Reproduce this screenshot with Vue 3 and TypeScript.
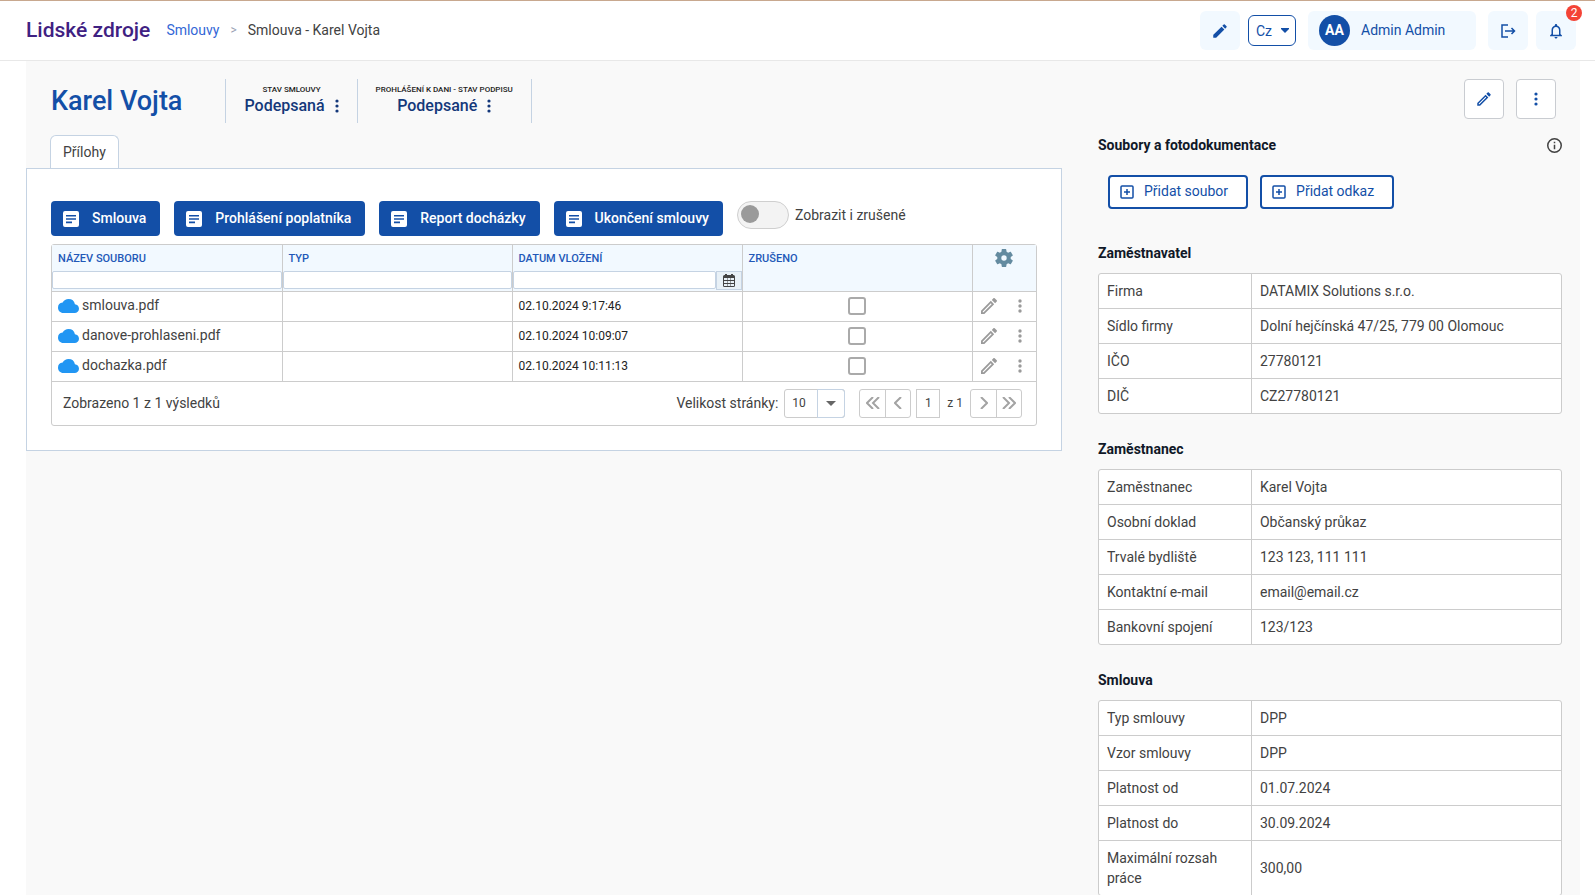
<script setup lang="ts">
import { ref } from 'vue'

interface Row { label: string; value: string }
interface Section { title: string; rows: Row[] }
interface FileRow { name: string; date: string; cancelled: boolean }

const PENCIL = 'M14.06 9.02l.92.92L5.92 19H5v-.92l9.06-9.06M17.66 3c-.25 0-.51.1-.7.29l-1.83 1.83 3.75 3.75 1.83-1.83c.39-.39.39-1.02 0-1.41l-2.34-2.34c-.2-.2-.45-.29-.71-.29zm-3.6 3.19L3 17.25V21h3.75L17.81 9.94l-3.75-3.75z'

const statuses = [
  { label: 'Stav smlouvy', value: 'Podepsaná' },
  { label: 'Prohlášení k dani - stav podpisu', value: 'Podepsané' },
]

const reports = ['Smlouva', 'Prohlášení poplatníka', 'Report docházky', 'Ukončení smlouvy']

const showCancelled = ref(false)

const files = ref<FileRow[]>([
  { name: 'smlouva.pdf', date: '02.10.2024 9:17:46', cancelled: false },
  { name: 'danove-prohlaseni.pdf', date: '02.10.2024 10:09:07', cancelled: false },
  { name: 'dochazka.pdf', date: '02.10.2024 10:11:13', cancelled: false },
])

const sections: Section[] = [
  {
    title: 'Zaměstnavatel',
    rows: [
      { label: 'Firma', value: 'DATAMIX Solutions s.r.o.' },
      { label: 'Sídlo firmy', value: 'Dolní hejčínská 47/25, 779 00 Olomouc' },
      { label: 'IČO', value: '27780121' },
      { label: 'DIČ', value: 'CZ27780121' },
    ],
  },
  {
    title: 'Zaměstnanec',
    rows: [
      { label: 'Zaměstnanec', value: 'Karel Vojta' },
      { label: 'Osobní doklad', value: 'Občanský průkaz' },
      { label: 'Trvalé bydliště', value: '123 123, 111 111' },
      { label: 'Kontaktní e-mail', value: 'email@email.cz' },
      { label: 'Bankovní spojení', value: '123/123' },
    ],
  },
  {
    title: 'Smlouva',
    rows: [
      { label: 'Typ smlouvy', value: 'DPP' },
      { label: 'Vzor smlouvy', value: 'DPP' },
      { label: 'Platnost od', value: '01.07.2024' },
      { label: 'Platnost do', value: '30.09.2024' },
      { label: 'Maximální rozsah práce', value: '300,00' },
    ],
  },
]
</script>

<template>
  <div class="page">
    <header class="topbar">
      <h2 class="app-name">Lidské zdroje</h2>
      <nav class="crumbs" aria-label="Navigace">
        <a href="#">Smlouvy</a>
        <span class="sep">&gt;</span>
        <span>Smlouva - Karel Vojta</span>
      </nav>
      <div class="tools">
        <div class="tool-group">
          <button class="tool" type="button" aria-label="Upravit">
            <svg viewBox="0 0 24 24" width="18" height="18"><path d="M3 17.46v3.04c0 .28.22.5.5.5h3.04c.13 0 .26-.05.35-.15L17.81 9.94l-3.75-3.75L3.15 17.1c-.1.1-.15.22-.15.36zM20.71 7.04a1 1 0 0 0 0-1.41l-2.34-2.34a1 1 0 0 0-1.41 0l-1.83 1.83 3.75 3.75 1.83-1.83z" /></svg>
          </button>
          <span class="lang">
            <select aria-label="Jazyk"><option>Cz</option></select>
            <svg viewBox="0 0 8 5" width="8" height="5"><path d="M0 0h8v1L4 5 0 1z" /></svg>
          </span>
        </div>
        <button class="user" type="button">
          <span class="avatar">AA</span>
          <span>Admin Admin</span>
        </button>
        <div class="tool-group">
          <button class="tool" type="button" aria-label="Odhlásit">
            <svg viewBox="0 0 16 16" width="16" height="16" class="line"><path d="M8 2H2v12h6M5 8h9M11.5 5l3 3-3 3" /></svg>
          </button>
          <button class="tool" type="button" aria-label="Oznámení">
            <svg viewBox="0 0 24 24" width="18" height="18"><path d="M12 22c1.1 0 2-.9 2-2h-4c0 1.1.9 2 2 2zm6-6v-5c0-3.07-1.63-5.64-4.5-6.32V4c0-.83-.67-1.5-1.5-1.5s-1.5.67-1.5 1.5v.68C7.64 5.36 6 7.92 6 11v5l-2 2v1h16v-1l-2-2zm-2 1H8v-6c0-2.48 1.51-4.5 4-4.5s4 2.02 4 4.5v6z" /></svg>
            <span class="badge">2</span>
          </button>
        </div>
      </div>
    </header>

    <main class="content">
      <div class="record-head">
        <h1>Karel Vojta</h1>
        <div class="statuses">
          <div v-for="s in statuses" :key="s.label" class="status">
            <span class="status-label">{{ s.label }}</span>
            <button class="status-value" type="button">
              {{ s.value }}
              <svg viewBox="0 0 4 14" width="4" height="14"><circle v-for="y in [2, 7, 12]" :key="y" cx="2" :cy="y" r="1.6" /></svg>
            </button>
          </div>
        </div>
        <div class="record-actions">
          <button type="button" aria-label="Upravit záznam">
            <svg viewBox="0 0 24 24" width="18" height="18"><path :d="PENCIL" /></svg>
          </button>
          <button type="button" aria-label="Další akce">
            <svg viewBox="0 0 4 14" width="4" height="14"><circle v-for="y in [2, 7, 12]" :key="y" cx="2" :cy="y" r="1.6" /></svg>
          </button>
        </div>
      </div>

      <div class="columns">
        <section class="main-col">
          <div class="tabs" role="tablist">
            <button class="tab" type="button" role="tab" aria-selected="true">Přílohy</button>
          </div>
          <div class="panel">
            <div class="actions">
              <button v-for="r in reports" :key="r" class="primary" type="button">
                <svg viewBox="0 0 16 16" width="16" height="16"><path fill-rule="evenodd" d="M2 0h12a2 2 0 0 1 2 2v12a2 2 0 0 1-2 2H2a2 2 0 0 1-2-2V2a2 2 0 0 1 2-2zM3 4v1.6h10V4zM3 7.2v1.6h10V7.2zM3 10.6v1.6h6v-1.6z" /></svg>
                <span>{{ r }}</span>
              </button>
              <label class="switch">
                <input v-model="showCancelled" type="checkbox" role="switch" />
                <span class="track"></span>
                Zobrazit i zrušené
              </label>
            </div>

            <div class="grid-box">
              <table class="files">
                <colgroup>
                  <col /><col /><col /><col /><col class="col-tools" />
                </colgroup>
                <thead>
                  <tr>
                    <th><span>Název souboru</span><input type="text" aria-label="Filtr: název souboru" /></th>
                    <th><span>Typ</span><input type="text" aria-label="Filtr: typ" /></th>
                    <th>
                      <span>Datum vložení</span>
                      <div class="date-filter">
                        <input type="text" aria-label="Filtr: datum vložení" />
                        <button type="button" aria-label="Vybrat datum">
                          <svg viewBox="0 0 12 13" width="12" height="13"><path fill-rule="evenodd" d="M2 0h2v1h4V0h2v1h.5A1.5 1.5 0 0 1 12 2.500v9a1.500 1.500 0 0 1-1.500 1.500h-9A1.500 1.500 0 0 1 0 11.500v-9A1.500 1.500 0 0 1 1.500 1H2zM1 4v2h3V4zM4.500 4v2h3V4zM8 4v2h3V4zM1 7v2h3V7zM4.500 7v2h3V7zM8 7v2h3V7zM1 10v2h3v-2zM4.500 10v2h3v-2zM8 10v2h3v-2z" /></svg>
                        </button>
                      </div>
                    </th>
                    <th><span>Zrušeno</span></th>
                    <th class="gear">
                      <button type="button" aria-label="Nastavení tabulky">
                        <svg viewBox="2 2 20 20" width="18" height="18"><path d="M19.43 12.98c.04-.32.07-.64.07-.98s-.03-.66-.07-.98l2.11-1.65c.19-.15.24-.42.12-.64l-2-3.46c-.12-.22-.39-.3-.61-.22l-2.49 1c-.52-.4-1.08-.73-1.69-.98l-.38-2.65A.49.49 0 0 0 14 2h-4c-.25 0-.46.18-.49.42l-.38 2.65c-.61.25-1.17.59-1.69.98l-2.49-1c-.23-.09-.49 0-.61.22l-2 3.46c-.13.22-.07.49.12.64l2.11 1.65c-.04.32-.07.65-.07.98s.03.66.07.98l-2.11 1.65c-.19.15-.24.42-.12.64l2 3.46c.12.22.39.3.61.22l2.49-1c.52.4 1.08.73 1.69.98l.38 2.65c.03.24.24.42.49.42h4c.25 0 .46-.18.49-.42l.38-2.65c.61-.25 1.17-.59 1.69-.98l2.49 1c.23.09.49 0 .61-.22l2-3.46c.12-.22.07-.49-.12-.64l-2.11-1.65zM12 15a3 3 0 1 1 0-6 3 3 0 0 1 0 6z" /></svg>
                      </button>
                    </th>
                  </tr>
                </thead>
                <tbody>
                  <tr v-for="f in files" :key="f.name">
                    <td>
                      <a href="#" class="file">
                        <svg viewBox="0 4 24 16" width="21" height="14"><path d="M19.35 10.04A7.49 7.49 0 0 0 12 4C9.11 4 6.6 5.64 5.35 8.04A5.994 5.994 0 0 0 0 14c0 3.31 2.69 6 6 6h13c2.76 0 5-2.24 5-5 0-2.64-2.05-4.78-4.65-4.96z" /></svg>
                        <span>{{ f.name }}</span>
                      </a>
                    </td>
                    <td></td>
                    <td class="date">{{ f.date }}</td>
                    <td class="center"><input v-model="f.cancelled" type="checkbox" :aria-label="'Zrušeno: ' + f.name" /></td>
                    <td>
                      <div class="row-tools">
                        <button type="button" aria-label="Upravit soubor"><svg viewBox="3 3 18 18" width="16" height="16"><path :d="PENCIL" /></svg></button>
                        <button type="button" aria-label="Další akce se souborem"><svg viewBox="0 0 4 16" width="4" height="16"><circle v-for="y in [3, 8, 13]" :key="y" cx="2" :cy="y" r="1.7" /></svg></button>
                      </div>
                    </td>
                  </tr>
                </tbody>
              </table>
              <div class="pager">
                <span class="summary">Zobrazeno 1 z 1 výsledků</span>
                <label for="page-size">Velikost stránky:</label>
                <span class="size">
                  <select id="page-size"><option>10</option></select>
                  <span class="size-arrow"><svg viewBox="0 0 10 5" width="10" height="5"><path d="M0 0h10L5 5z" /></svg></span>
                </span>
                <span class="pair">
                  <button type="button" aria-label="První strana"><svg viewBox="0 0 14 12" width="14" height="12"><path d="M7 0L1 6l6 6M13 0L7 6l6 6" /></svg></button>
                  <button type="button" aria-label="Předchozí strana"><svg viewBox="0 0 8 12" width="8" height="12"><path d="M7 0L1 6l6 6" /></svg></button>
                </span>
                <input class="page-no" type="text" value="1" aria-label="Strana" />
                <span class="of">z 1</span>
                <span class="pair">
                  <button type="button" aria-label="Další strana"><svg viewBox="0 0 8 12" width="8" height="12"><path d="M1 0l6 6-6 6" /></svg></button>
                  <button type="button" aria-label="Poslední strana"><svg viewBox="0 0 14 12" width="14" height="12"><path d="M1 0l6 6-6 6M7 0l6 6-6 6" /></svg></button>
                </span>
              </div>
            </div>
          </div>
        </section>

        <aside class="side-col">
          <div class="side-head">
            <h3>Soubory a fotodokumentace</h3>
            <svg viewBox="2 2 20 20" width="15" height="15"><path d="M11 7h2v2h-2zm0 4h2v6h-2zm1-9a10 10 0 1 0 0 20 10 10 0 0 0 0-20zm0 18a8 8 0 1 1 0-16 8 8 0 0 1 0 16z" /></svg>
          </div>
          <div class="add-row">
            <button v-for="t in ['Přidat soubor', 'Přidat odkaz']" :key="t" class="outline" type="button">
              <svg viewBox="0 0 14 14" width="14" height="14"><path d="M2 1h10a1 1 0 0 1 1 1v10a1 1 0 0 1-1 1H2a1 1 0 0 1-1-1V2a1 1 0 0 1 1-1zM7 4v6M4 7h6" /></svg>
              <span>{{ t }}</span>
            </button>
          </div>
          <section v-for="s in sections" :key="s.title" class="facts">
            <h3>{{ s.title }}</h3>
            <div class="facts-box">
              <table>
                <tbody>
                  <tr v-for="r in s.rows" :key="r.label">
                    <th scope="row">{{ r.label }}</th>
                    <td>{{ r.value }}</td>
                  </tr>
                </tbody>
              </table>
            </div>
          </section>
        </aside>
      </div>
    </main>
  </div>
</template>

<style>
body {
  background: #fff;
}
</style>

<style scoped>
.page {
  display: flex;
  flex-direction: column;
  height: 100vh;
  overflow: hidden;
  border-top: 1px solid #c8a88f;
  box-sizing: border-box;
  font-family: Roboto, "Liberation Sans", sans-serif;
  font-size: 14px;
  line-height: 20px;
  color: #424242;
}
.page *,
.page *::before {
  box-sizing: border-box;
}
button,
input,
select {
  font: inherit;
  color: inherit;
  margin: 0;
}
button {
  padding: 0;
  border: 0;
  background: none;
  cursor: pointer;
}
svg {
  display: block;
  flex: none;
  fill: currentColor;
}
a {
  text-decoration: none;
}
h1,
h2,
h3 {
  margin: 0;
}

.topbar {
  display: flex;
  align-items: center;
  flex: none;
  height: 60px;
  padding: 0 19px 0 26px;
  border-bottom: 1px solid #e8e8e8;
}
.app-name {
  margin-right: 16px;
  padding-bottom: 2px;
  font-size: 21px;
  font-weight: 500;
  color: #3f2182;
}
.crumbs {
  display: flex;
  gap: 11px;
  padding-bottom: 2px;
}
.crumbs a {
  color: #3367d6;
}
.crumbs .sep {
  font-size: 12px;
  color: #9a9fb5;
}
.tools {
  display: flex;
  align-items: center;
  gap: 12px;
  margin-left: auto;
  color: #134fa7;
}
.tool-group {
  display: flex;
  align-items: center;
  gap: 8px;
}
.tool {
  position: relative;
  display: grid;
  place-items: center;
  width: 40px;
  height: 39px;
  border-radius: 6px;
  background: #f2f9ff;
}
.line {
  fill: none;
  stroke: currentColor;
  stroke-width: 1.5;
}
.badge {
  position: absolute;
  top: -6px;
  right: -6px;
  width: 16px;
  height: 16px;
  border-radius: 50%;
  background: #f44336;
  color: #fff;
  font-size: 12px;
  line-height: 16px;
}
.lang {
  position: relative;
  display: flex;
  align-items: center;
}
.lang select {
  appearance: none;
  width: 48px;
  height: 31px;
  padding: 0 0 0 7px;
  border: 1px solid #134fa7;
  border-radius: 6px;
  background: #fff;
}
.lang svg {
  position: absolute;
  right: 7px;
  pointer-events: none;
}
.user {
  display: flex;
  align-items: center;
  gap: 11px;
  width: 168px;
  height: 39px;
  padding: 0 0 1px 11px;
  border-radius: 6px;
  background: #f2f9ff;
}
.avatar {
  width: 31px;
  height: 31px;
  border-radius: 50%;
  background: #134fa7;
  color: #fff;
  font-weight: 700;
  line-height: 31px;
}

.content {
  flex: 1;
  min-height: 0;
  margin: 0 15px 0 26px;
  background: #f9f9f9;
}
.record-head {
  display: flex;
  align-items: flex-start;
  padding: 18px 24px 0 25px;
}
h1 {
  font-size: 27px;
  font-weight: 500;
  line-height: 44px;
  color: #134fa7;
}
.statuses {
  display: flex;
  margin-left: 43px;
  border-left: 1px solid #c5d3e3;
}
.status {
  display: flex;
  flex-direction: column;
  align-items: center;
  height: 44px;
  padding: 6px 18px 0;
  border-right: 1px solid #c5d3e3;
}
.status-label {
  font-size: 8px;
  font-weight: 500;
  line-height: 10px;
  text-transform: uppercase;
  color: #222;
}
.status-value {
  display: flex;
  align-items: center;
  gap: 10px;
  font-size: 16px;
  font-weight: 500;
  line-height: 22px;
  color: #14387a;
}
.record-actions {
  display: flex;
  gap: 12px;
  margin-left: auto;
}
.record-actions button {
  display: grid;
  place-items: center;
  width: 40px;
  height: 40px;
  border: 1px solid #c9ccd1;
  border-radius: 4px;
  background: #fff;
  color: #134fa7;
}

.columns {
  display: grid;
  grid-template-columns: minmax(0, 1036fr) minmax(0, 464fr);
  gap: 36px;
  align-items: start;
  padding-right: 18px;
}
.tabs {
  display: flex;
  padding: 12px 0 0 24px;
}
.tab {
  height: 33px;
  padding: 0 12px;
  border: 1px solid #c5d3e3;
  border-bottom: 0;
  border-radius: 6px 6px 0 0;
  background: #fff;
}
.panel {
  padding: 32px 24px 24px;
  border: 1px solid #c5d3e3;
  background: #fff;
}
.actions {
  display: flex;
  gap: 14px;
  margin-bottom: 8px;
}
.primary {
  display: flex;
  align-items: center;
  gap: 13px;
  height: 35px;
  padding: 0 14px 0 12px;
  border-radius: 4px;
  background: #134fa7;
  color: #fff;
  font-weight: 500;
}
.primary span,
.outline span,
.file span {
  padding-bottom: 2px;
}
.switch {
  display: flex;
  align-items: center;
  gap: 6px;
  height: 28px;
  cursor: pointer;
}
.switch input {
  position: absolute;
  opacity: 0;
}
.track {
  width: 52px;
  height: 28px;
  padding: 3px;
  border: 1px solid #cfcfcf;
  border-radius: 14px;
  background: #f3f3f3;
}
.track::before {
  content: "";
  display: block;
  width: 18px;
  height: 18px;
  border-radius: 50%;
  background: #9a9a9a;
}
.switch input:checked + .track {
  background: #cfe2ff;
}

.grid-box {
  border: 1px solid #ccc;
  border-radius: 3px;
}
.files {
  width: 100%;
  border-collapse: collapse;
  table-layout: fixed;
}
.col-tools {
  width: 64px;
}
.files th {
  height: 46px;
  padding: 0;
  vertical-align: top;
  text-align: left;
  border: 1px solid #ccc;
  background: #f2f9ff;
}
.files th > span {
  display: block;
  height: 26px;
  padding-left: 6px;
  font-size: 11px;
  font-weight: 500;
  line-height: 28px;
  text-transform: uppercase;
  color: #2258b8;
}
.files tr > :first-child {
  border-left: 0;
}
.files tr > :last-child {
  border-right: 0;
}
.files thead th {
  border-top: 0;
}
.files th input {
  display: block;
  width: 100%;
  height: 18px;
  border: 1px solid #c5d3e3;
  border-radius: 2px;
  background: #fff;
}
.date-filter {
  display: flex;
}
.date-filter button {
  display: grid;
  place-items: center;
  flex: none;
  width: 26px;
  height: 19px;
  border: 1px solid #c5d3e3;
  background: #e9f1f7;
  color: #444;
}
.gear button {
  display: block;
  margin: 4px auto 0;
  color: #648ba0;
}
.files td {
  height: 30px;
  padding: 0 6px;
  border: 1px solid #ccc;
}
.file {
  display: flex;
  align-items: center;
  gap: 3px;
  color: #424242;
}
.file svg {
  color: #2196f3;
}
.files .date {
  font-size: 12px;
  color: #222;
}
.center input {
  appearance: none;
  display: block;
  width: 18px;
  height: 18px;
  margin: 0 auto;
  border: 2px solid #aaa;
  border-radius: 3px;
  background: #fff;
}
.center input:checked {
  background: #134fa7;
}
.row-tools {
  display: flex;
  justify-content: space-between;
  padding: 0 8px 0 2px;
  color: #9a9a9a;
}
.pager {
  display: flex;
  align-items: center;
  height: 43px;
  padding: 0 14px 0 11px;
}
.summary {
  margin-right: auto;
}
.size {
  position: relative;
  display: flex;
  margin: 0 14px 0 6px;
}
.size select {
  appearance: none;
  width: 61px;
  height: 29px;
  padding: 0 0 0 7px;
  border: 1px solid #ccc;
  border-radius: 3px;
  background: #fff;
  font-size: 12px;
}
.size-arrow {
  position: absolute;
  top: 0;
  right: 0;
  display: grid;
  place-items: center;
  width: 28px;
  height: 29px;
  border: 1px solid #c5d3e3;
  border-radius: 0 3px 3px 0;
  pointer-events: none;
  color: #666;
}
.pair {
  display: flex;
  border: 1px solid #ccc;
  border-radius: 3px;
}
.pair button {
  display: grid;
  place-items: center;
  width: 25px;
  height: 27px;
  color: #a3a3a3;
}
.pair button + button {
  border-left: 1px solid #ccc;
}
.pair svg {
  fill: none;
  stroke: currentColor;
  stroke-width: 2;
}
.page-no {
  width: 24px;
  height: 29px;
  margin: 0 7px 0 5px;
  padding: 0;
  border: 1px solid #ccc;
  text-align: center;
  font-size: 12px;
}
.of {
  margin-right: 7px;
  font-size: 12px;
}

.side-head {
  display: flex;
  align-items: center;
  justify-content: space-between;
  margin-top: 12px;
}
h3 {
  font-size: 14px;
  font-weight: 700;
  line-height: 20px;
  color: #101828;
}
.add-row {
  display: flex;
  gap: 12px;
  margin: 20px 0 34px 10px;
}
.outline {
  display: flex;
  align-items: center;
  gap: 10px;
  height: 34px;
  padding: 0 18px 0 10px;
  border: 2px solid #134fa7;
  border-radius: 4px;
  background: #fff;
  color: #134fa7;
}
.outline svg {
  fill: none;
  stroke: currentColor;
  stroke-width: 1.5;
}
.facts {
  margin-bottom: 25px;
}
.facts h3 {
  margin-bottom: 10px;
}
.facts-box {
  border: 1px solid #ccc;
  border-radius: 3px;
  background: #fff;
}
.facts table {
  width: 100%;
  border-collapse: collapse;
}
.facts tr + tr > * {
  border-top: 1px solid #ccc;
}
.facts th,
.facts td {
  padding: 7px 8px;
  font-weight: 400;
  text-align: left;
}
.facts th {
  width: 33%;
  border-right: 1px solid #ccc;
}
</style>
